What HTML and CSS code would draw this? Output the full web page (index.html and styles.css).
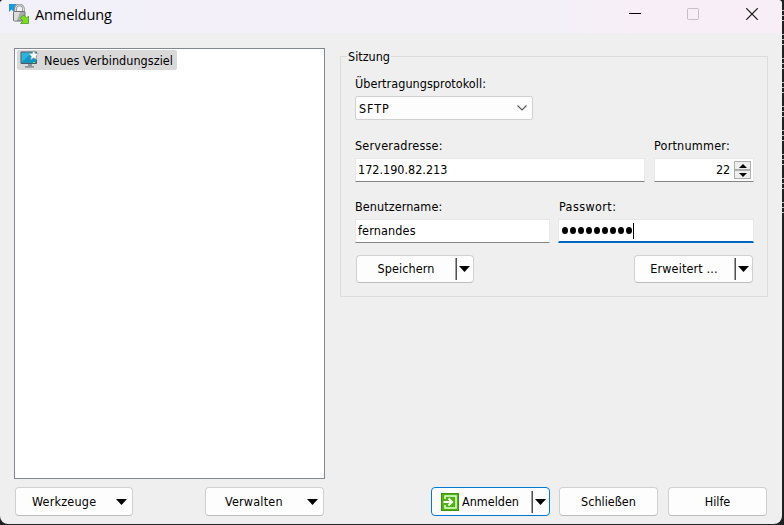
FILE: index.html
```html
<!DOCTYPE html>
<html lang="de">
<head>
<meta charset="utf-8">
<title>Anmeldung</title>
<link rel="stylesheet" href="styles.css">
</head>
<body>
<div class="window">
  <header class="titlebar">
    <svg class="app-icon" width="21" height="21" viewBox="0 0 21 21">
      <path d="M0 0h8L5.500 2.500l2.500 2.500-3 3-2.500-2.500L0 8z" fill="#1c9ad8"/>
      <path d="M6.500 8V5a4 4 0 0 1 8 0v3" fill="none" stroke="#888" stroke-width="2.600"/>
      <path d="M6.500 8V5a4 4 0 0 1 8 0v3" fill="none" stroke="#ddd" stroke-width="1.200"/>
      <rect x="4.500" y="7.500" width="11.500" height="9.500" rx="1" fill="#aaa" stroke="#707070"/>
      <path d="M5 8h6L8 16.500H5z" fill="#dcdcdc"/>
      <path d="M12.500 12.500l2.500-1.500 2.500 3 2-2v7.500h-8l2.500-2.500-2.500-2.500z" fill="#7ddc22" stroke="#4a9e1c" stroke-width=".8"/>
    </svg>
    <h1>Anmeldung</h1>
    <div class="controls">
      <svg width="12" height="12" viewBox="0 0 12 12"><path d="M0 5.500h12" stroke="#000"/></svg>
      <svg width="12" height="12" viewBox="0 0 12 12"><rect x=".5" y=".5" width="11" height="11" rx=".8" fill="none" stroke="#c6bec8"/></svg>
      <svg width="12" height="12" viewBox="0 0 12 12"><path d="M.3.300l11.400 11.400M11.700.300L.300 11.700" stroke="#111" stroke-width="1.200"/></svg>
    </div>
  </header>
  <main class="content">
    <section class="sites">
      <div class="site">
        <svg width="20" height="20" viewBox="0 0 20 20">
          <path d="M8 14h4v2h2v1.700H5V16h3z" fill="#8d959c"/>
          <rect x=".5" y="1.500" width="16.500" height="12.500" rx="1" fill="#4a5a68"/>
          <rect x="1.500" y="2.500" width="14.500" height="10" fill="#2cb5d8"/>
          <path d="M1.500 12.500L12 2.500h4v10z" fill="#0e97c2"/>
          <path d="M13.800.500l1.500 3 3.200.400-2.400 2.200.700 3.400-3-1.700-3 1.700.600-3.400L9 3.900l3.300-.400z" fill="#fff" stroke="#a3abb1" stroke-width=".8"/>
          <rect x="13" y="12" width="2" height="1" fill="#7ee04b"/>
        </svg>
        <span class="t-new">Neues Verbindungsziel</span>
      </div>
    </section>
    <section class="session">
      <fieldset class="group">
        <legend class="t-session">Sitzung</legend>
        <div class="field protocol">
          <label class="t-proto">Übertragungsprotokoll:</label>
          <div class="select"><span class="t-sftp">SFTP</span><svg width="10" height="6" viewBox="0 0 10 6"><path d="M.5.500L5 5 9.500.500" fill="none" stroke="#555" stroke-width="1.100"/></svg></div>
        </div>
        <div class="row host-row">
          <div class="field host">
            <label class="t-server">Serveradresse:</label>
            <div class="input"><span class="t-ip">172.190.82.213</span></div>
          </div>
          <div class="field port">
            <label class="t-port">Portnummer:</label>
            <div class="input number"><span class="t-22">22</span>
              <div class="spin">
                <i><svg width="8" height="4" viewBox="0 0 8 4"><path d="M0 4L4 0l4 4z"/></svg></i>
                <i><svg width="8" height="4" viewBox="0 0 8 4"><path d="M0 0h8L4 4z"/></svg></i>
              </div>
            </div>
          </div>
        </div>
        <div class="row user-row">
          <div class="field user">
            <label class="t-user">Benutzername:</label>
            <div class="input"><span class="t-fern">fernandes</span></div>
          </div>
          <div class="field pass">
            <label class="t-pass">Passwort:</label>
            <div class="input focus"><span class="dots"><b></b><b></b><b></b><b></b><b></b><b></b><b></b><b></b><b></b></span><span class="caret"></span></div>
          </div>
        </div>
        <div class="row actions">
          <div class="button split save"><span class="caption"><span class="t-save">Speichern</span></span><span class="drop"><svg width="11" height="6" viewBox="0 0 11 6"><path d="M0 0h11L5.500 6z"/></svg></span></div>
          <div class="button split adv"><span class="caption"><span class="t-adv">Erweitert ...</span></span><span class="drop"><svg width="11" height="6" viewBox="0 0 11 6"><path d="M0 0h11L5.500 6z"/></svg></span></div>
        </div>
      </fieldset>
    </section>
  </main>
  <footer class="footer">
    <div class="button menu tools"><span class="t-tools">Werkzeuge</span><svg width="11" height="6" viewBox="0 0 11 6"><path d="M0 0h11L5.500 6z"/></svg></div>
    <div class="button menu manage"><span class="t-manage">Verwalten</span><svg width="11" height="6" viewBox="0 0 11 6"><path d="M0 0h11L5.500 6z"/></svg></div>
    <div class="button split login">
      <span class="caption">
        <svg width="18" height="18" viewBox="0 0 18 18">
          <rect x=".5" y=".5" width="17" height="17" fill="#50b313" stroke="#3c960b"/>
          <path d="M4 6V3h11v12H4v-3" fill="none" stroke="#eaffdc" stroke-width="1.500"/>
          <path d="M2.500 9h8M7.500 5.500L11 9l-3.500 3.500" fill="none" stroke="#fff" stroke-width="2"/>
        </svg>
        <span class="t-login">Anmelden</span>
      </span>
      <span class="drop"><svg width="11" height="6" viewBox="0 0 11 6"><path d="M0 0h11L5.500 6z"/></svg></span>
    </div>
    <div class="button plain close"><span class="t-close">Schließen</span></div>
    <div class="button plain help"><span class="t-help">Hilfe</span></div>
  </footer>
</div>
</body>
</html>
```
FILE: styles.css
```css
* { box-sizing: border-box; }
html { background: #202022; }
body {
  margin: 0;
  width: 784px;
  height: 525px;
  overflow: hidden;
  background:
    repeating-linear-gradient(transparent 0 10px, #c8c4c4 10px 11px, transparent 11px 15px, #c8c4c4 15px 16px, transparent 16px 20px, #c8c4c4 20px 21px, transparent 21px 24px) 782px 0 / 2px 216px no-repeat,
    #202022;
  color: #000;
  font: 12.5px/16px "DejaVu Sans Condensed", "DejaVu Sans", sans-serif;
  font-stretch: condensed;
  white-space: nowrap;
}
svg { display: block; flex: none; }
.window {
  width: 782px;
  height: 524px;
  display: flex;
  flex-direction: column;
  background: #efefef;
  border-radius: 4px 4px 8px 8px;
  overflow: hidden;
}
.titlebar {
  height: 33px;
  flex: none;
  display: flex;
  align-items: flex-start;
  padding: 4px 24px 0 9px;
  background: linear-gradient(90deg, #f2f0f8 0%, #f3f0f8 70%, #f8eef8 82%);
}
.titlebar h1 {
  margin: 0 0 0 5px;
  padding-top: 1px;
  font: 14.5px/20px "Open Sans", "Noto Sans", sans-serif;
  letter-spacing: -0.12px;
}
.controls { display: flex; gap: 46px; margin-left: auto; padding-top: 4px; }
.controls svg:nth-child(2) { margin-right: 1px; }
.content { height: 446px; flex: none; display: flex; padding: 15px 14px 0; }
.sites {
  width: 311px;
  height: 431px;
  flex: none;
  padding: 1px 2px;
  border: 1px solid #828790;
  background: #fff;
}
.site {
  width: 160px;
  height: 20px;
  display: flex;
  align-items: center;
  gap: 4px;
  padding-left: 3px;
  border-radius: 2px;
  background: #d9d9d9;
}
.t-new { padding-top: 2px; letter-spacing: 0.05px; }
.session { margin-left: 15px; }
.group {
  width: 428px;
  height: 249px;
  margin: 0;
  padding: 11px 13px 0 14px;
  border: 1px solid #dcdcdc;
}
.group legend { padding: 1px 1px 0; margin-left: -8px; height: 17px; }
.field { display: flex; flex-direction: column; }
.field label { height: 16px; }
.t-proto { letter-spacing: 0.05px; }
.t-server { letter-spacing: 0.22px; }
.t-port { letter-spacing: 0.22px; }
.t-user { letter-spacing: 0.08px; }
.t-pass { letter-spacing: 0.4px; padding-left: 1px; }
.t-fern { letter-spacing: 0.15px; }
.t-sftp { padding-top: 2px; letter-spacing: 0.9px; }
.row { display: flex; }
.select {
  width: 178px;
  height: 24px;
  margin-top: 4px;
  display: flex;
  align-items: center;
  justify-content: space-between;
  padding: 0 5px 0 3px;
  border: 1px solid #d0d0d0;
  border-radius: 2px;
  background: #fdfdfd;
}
.input {
  height: 24px;
  margin-top: 4px;
  display: flex;
  align-items: center;
  padding: 0 2px;
  border: 1px solid #e8e8e8;
  border-bottom-color: #858585;
  border-radius: 1px;
  background: #fff;
}
.host-row { margin-top: 18px; gap: 9px; }
.host { width: 290px; }
.port { width: 100px; }
.number { justify-content: flex-end; gap: 4px; padding-right: 2px; }
.t-22 { letter-spacing: -0.2px; }
.spin { width: 17px; display: grid; }
.spin i {
  height: 9px;
  display: flex;
  align-items: center;
  justify-content: center;
  border: 1px solid #adadad;
  background: #eee;
}
.user-row { margin-top: 17px; gap: 8px; }
.user { width: 195px; }
.pass { width: 196px; }
.focus { border-bottom: 2px solid #0067c0; }
.dots { display: flex; gap: 2px; padding-left: 1px; }
.dots b { width: 6px; height: 7px; border-radius: 50%; background: #000; }
.caret { width: 1px; height: 16px; margin-left: 1px; background: #000; }
.actions { justify-content: space-between; margin-top: 12px; padding: 0 1px; }
.button {
  height: 28px;
  display: flex;
  align-items: center;
  border: 1px solid #d0d0d0;
  border-bottom-color: #bdbdbd;
  border-radius: 4px;
  background: #fdfdfd;
}
.caption { flex: 1; display: flex; align-items: center; justify-content: center; gap: 3px; }
.drop {
  width: 17px;
  height: 22px;
  display: flex;
  align-items: center;
  padding-left: 2px;
  border-left: 1px solid #505050;
  box-shadow: -1px 0 #a0a0a0;
}
.save { width: 118px; }
.save .caption { padding-right: 1px; }
.t-save { letter-spacing: 0.12px; }
.adv { width: 119px; }
.adv .caption { padding-right: 2px; }
.t-adv { letter-spacing: 0.15px; }
.footer { display: flex; padding: 8px 15px 0; }
.footer .button { height: 29px; }
.menu { justify-content: space-between; padding: 0 5px 0 16px; }
.t-tools, .t-manage { letter-spacing: 0.2px; }
.tools { width: 118px; }
.manage { width: 119px; margin-left: 72px; padding-left: 19px; }
.footer .login { width: 119px; margin-left: 107px; border-color: #0078d4; }
.login .caption { padding-right: 4px; }
.plain { justify-content: center; }
.close { width: 99px; margin-left: 9px; }
.help { width: 99px; margin-left: 10px; }
```
